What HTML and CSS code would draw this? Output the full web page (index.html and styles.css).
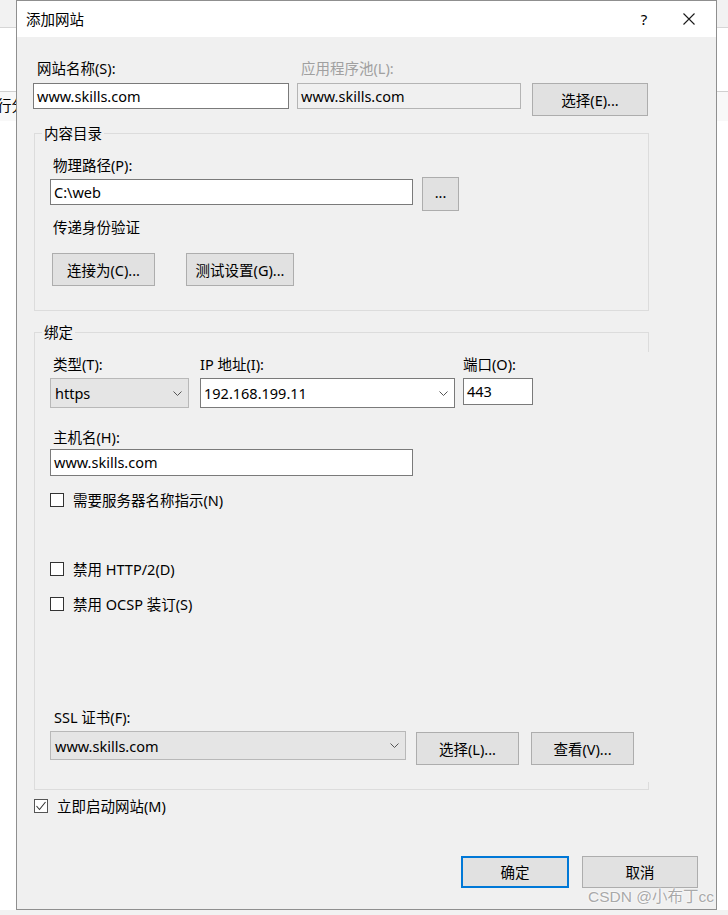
FILE: index.html
```html
<!DOCTYPE html>
<html lang="zh-CN">
<head>
    <meta charset="UTF-8">
    <meta name="viewport" content="width=device-width, initial-scale=1.0">
    <title>添加网站</title>
    <link rel="stylesheet" href="styles.css">
</head>
<body>
    <span class="behind-text">行分</span>

    <div class="dialog">
        <div class="titlebar">
            <span class="title">添加网站</span>
            <span class="help">?</span>
            <span class="close">
                <svg width="12" height="12" viewBox="0 0 12 12">
                    <path d="M0.5 0.5 L11.5 11.5 M11.5 0.5 L0.5 11.5" stroke="#1a1a1a" stroke-width="1.1" fill="none"/>
                </svg>
            </span>
        </div>

        <div class="dialog-body">
            <div class="site-row">
                <div class="field name-field">
                    <div class="label">网站名称(S):</div>
                    <div class="textbox">www.skills.com</div>
                </div>
                <div class="field pool-field">
                    <div class="label disabled">应用程序池(L):</div>
                    <div class="textbox readonly">www.skills.com</div>
                </div>
                <button class="btn btn-pool">选择(E)...</button>
            </div>

            <fieldset class="group content-group">
                <legend>内容目录</legend>
                <div class="label">物理路径(P):</div>
                <div class="path-row">
                    <div class="textbox path-box">C:\web</div>
                    <button class="btn btn-browse">...</button>
                </div>
                <div class="label pass-label">传递身份验证</div>
                <div class="auth-row">
                    <button class="btn btn-connect">连接为(C)...</button>
                    <button class="btn btn-test">测试设置(G)...</button>
                </div>
            </fieldset>

            <fieldset class="group binding-group">
                <legend>绑定</legend>
                <div class="binding-row">
                    <div class="field type-field">
                        <div class="label">类型(T):</div>
                        <div class="combo combo-gray">
                            <span>https</span>
                            <svg width="9" height="5" viewBox="0 0 9 5"><polyline points="0.5,0.5 4.5,4.5 8.5,0.5" stroke="#555" fill="none"/></svg>
                        </div>
                    </div>
                    <div class="field ip-field">
                        <div class="label flush">IP 地址(I):</div>
                        <div class="combo">
                            <span>192.168.199.11</span>
                            <svg width="9" height="5" viewBox="0 0 9 5"><polyline points="0.5,0.5 4.5,4.5 8.5,0.5" stroke="#555" fill="none"/></svg>
                        </div>
                    </div>
                    <div class="field port-field">
                        <div class="label flush">端口(O):</div>
                        <div class="textbox port-box">443</div>
                    </div>
                </div>

                <div class="label host-label">主机名(H):</div>
                <div class="textbox host-box">www.skills.com</div>

                <div class="check sni-check"><span class="box"></span>需要服务器名称指示(N)</div>
                <div class="check http2-check"><span class="box"></span>禁用 HTTP/2(D)</div>
                <div class="check ocsp-check"><span class="box"></span>禁用 OCSP 装订(S)</div>

                <div class="label ssl-label">SSL 证书(F):</div>
                <div class="ssl-row">
                    <div class="combo combo-gray ssl-combo">
                        <span>www.skills.com</span>
                        <svg width="9" height="5" viewBox="0 0 9 5"><polyline points="0.5,0.5 4.5,4.5 8.5,0.5" stroke="#555" fill="none"/></svg>
                    </div>
                    <button class="btn btn-ssl">选择(L)...</button>
                    <button class="btn btn-ssl view">查看(V)...</button>
                </div>
            </fieldset>

            <div class="check start-check">
                <span class="box">
                    <svg width="12" height="12" viewBox="0 0 12 12"><polyline points="1.5,6 4.5,9.5 10.5,2" stroke="#333" stroke-width="1.1" fill="none"/></svg>
                </span>立即启动网站(M)
            </div>

            <div class="footer">
                <button class="btn btn-ok">确定</button>
                <button class="btn btn-cancel">取消</button>
            </div>
        </div>

        <div class="watermark">CSDN @小布丁cc</div>
    </div>
</body>
</html>
```

FILE: styles.css
```css
body {
    margin: 0;
    font-family: "Noto Sans", "Noto Sans CJK SC", sans-serif;
    font-size: 14.5px;
    color: #000;
    background: linear-gradient(to bottom,
        #f2f2f2 0, #f2f2f2 27px,
        #d6d6d6 27px, #d6d6d6 28px,
        #ffffff 28px, #ffffff 91px,
        #d0d0d0 91px, #d0d0d0 92px,
        #f8f8f8 92px, #f8f8f8 121px,
        #ffffff 121px);
}

.behind-text {
    position: absolute;
    left: -3px;
    top: 95px;
    line-height: 20px;
}

.dialog {
    position: relative;
    z-index: 1;
    margin-left: 16px;
    width: 701px;
    height: 910px;
    box-sizing: border-box;
    border: 1px solid #8f8f8f;
    background: #f0f0f0;
    display: flex;
    flex-direction: column;
}

.titlebar {
    height: 36px;
    background: #fff;
    display: flex;
    align-items: center;
    line-height: 20px;
}

.title {
    flex: 1;
    padding-left: 9px;
}

.help {
    width: 30px;
    text-align: center;
    margin-right: 7px;
    font-size: 15px;
}

.close {
    width: 46px;
    margin-right: 4px;
    display: flex;
    justify-content: center;
}

.dialog-body {
    flex: 1;
    display: flex;
    flex-direction: column;
    padding: 21px 0 0 16px;
}

.label {
    line-height: 20px;
    padding-left: 3px;
    white-space: nowrap;
}

.label.flush {
    padding-left: 0;
}

.label.disabled {
    color: #a0a0a0;
}

.textbox {
    box-sizing: border-box;
    height: 26px;
    line-height: 24px;
    border: 1px solid #7a7a7a;
    background: #fff;
    padding-left: 3px;
    white-space: nowrap;
}

.textbox.readonly {
    background: #f0f0f0;
    border-color: #b4b4b4;
}

.btn {
    box-sizing: border-box;
    height: 33px;
    border: 1px solid #adadad;
    background: #e1e1e1;
    font: inherit;
    color: #000;
    padding: 0;
    line-height: 20px;
}

/* first row */
.site-row {
    display: flex;
    align-items: flex-start;
}

.name-field .label,
.pool-field .label {
    padding-left: 4px;
}

.name-field .textbox,
.pool-field .textbox {
    margin-top: 5px;
}

.name-field {
    width: 256px;
    margin-right: 8px;
}

.pool-field {
    width: 224px;
    margin-right: 11px;
}

.btn-pool {
    width: 116px;
    margin-top: 25px;
}

/* group boxes */
.group {
    position: relative;
    margin: 0 0 0 1px;
    width: 615px;
    box-sizing: border-box;
    border: 1px solid #dcdcdc;
    padding: 12px 0 24px 15px;
    min-width: 0;
}

.group legend {
    padding: 0 2px;
    margin-left: -8px;
    line-height: 20px;
}

.content-group {
    margin-top: 7px;
}

.path-row {
    display: flex;
    align-items: flex-start;
    gap: 9px;
    margin-top: 2px;
}

.path-box {
    width: 363px;
    margin-top: 2px;
}

.btn-browse {
    width: 37px;
    height: 34px;
    line-height: 14px;
    padding-bottom: 4px;
}

.pass-label {
    margin-top: 6px;
}

.auth-row {
    display: flex;
    gap: 31px;
    margin: 16px 0 0 2px;
}

.btn-connect {
    width: 103px;
}

.btn-test {
    width: 108px;
}

/* binding group */
.binding-group {
    margin-top: 11px;
    border-right: none;
}

.binding-group::before,
.binding-group::after {
    content: "";
    position: absolute;
    right: 0;
    width: 1px;
    background: #dcdcdc;
}

.binding-group::before {
    top: -10px;
    height: 20px;
}

.binding-group::after {
    bottom: 0;
    height: 7px;
}

.binding-row {
    display: flex;
    align-items: flex-start;
}

.binding-row .combo,
.binding-row .textbox {
    margin-top: 4px;
}

.type-field {
    width: 139px;
    margin-right: 11px;
}

.ip-field {
    width: 255px;
    margin-right: 8px;
}

.port-field {
    width: 70px;
}

.combo {
    box-sizing: border-box;
    height: 30px;
    border: 1px solid #7a7a7a;
    background: #fff;
    display: flex;
    align-items: center;
    justify-content: space-between;
    padding: 0 6px 0 3px;
    white-space: nowrap;
}

.combo-gray {
    background: #e5e5e5;
    border-color: #b8b8b8;
    padding-left: 4px;
}

.port-box {
    height: 27px;
    line-height: 25px;
}

.host-label {
    margin-top: 19px;
}

.host-box {
    width: 363px;
    height: 27px;
    line-height: 25px;
    margin-top: 2px;
}

.check {
    display: flex;
    align-items: center;
    line-height: 20px;
}

.check .box {
    box-sizing: border-box;
    width: 14px;
    height: 14px;
    border: 1px solid #333;
    background: #fff;
    margin-right: 9px;
    display: flex;
    align-items: center;
    justify-content: center;
}

.sni-check {
    margin-top: 14px;
}

.http2-check {
    margin-top: 49px;
}

.ocsp-check {
    margin-top: 15px;
}

.ssl-label {
    margin-top: 93px;
    padding-left: 4px;
}

.ssl-row {
    display: flex;
    align-items: flex-start;
    margin-top: 4px;
}

.ssl-combo {
    width: 356px;
    height: 29px;
    margin-right: 10px;
}

.btn-ssl {
    width: 103px;
    margin-top: 1px;
}

.btn-ssl.view {
    margin-left: 12px;
}

.start-check {
    margin: 6px 0 0 1px;
}

.start-check .box {
    border-color: #555;
}

.footer {
    margin-top: auto;
    display: flex;
    justify-content: flex-end;
    gap: 13px;
    padding: 0 18px 21px 0;
}

.btn-ok {
    width: 108px;
    height: 32px;
    border: 2px solid #0078d7;
}

.btn-cancel {
    width: 116px;
    height: 32px;
}

.watermark {
    position: absolute;
    right: 2px;
    bottom: 3px;
    line-height: 18px;
    font-family: "Liberation Sans", "Noto Sans CJK SC", sans-serif;
    font-size: 15.5px;
    color: #a9a9a9;
    text-shadow: 0 0 2px #fff, 0 0 2px #fff;
    white-space: nowrap;
}
```
